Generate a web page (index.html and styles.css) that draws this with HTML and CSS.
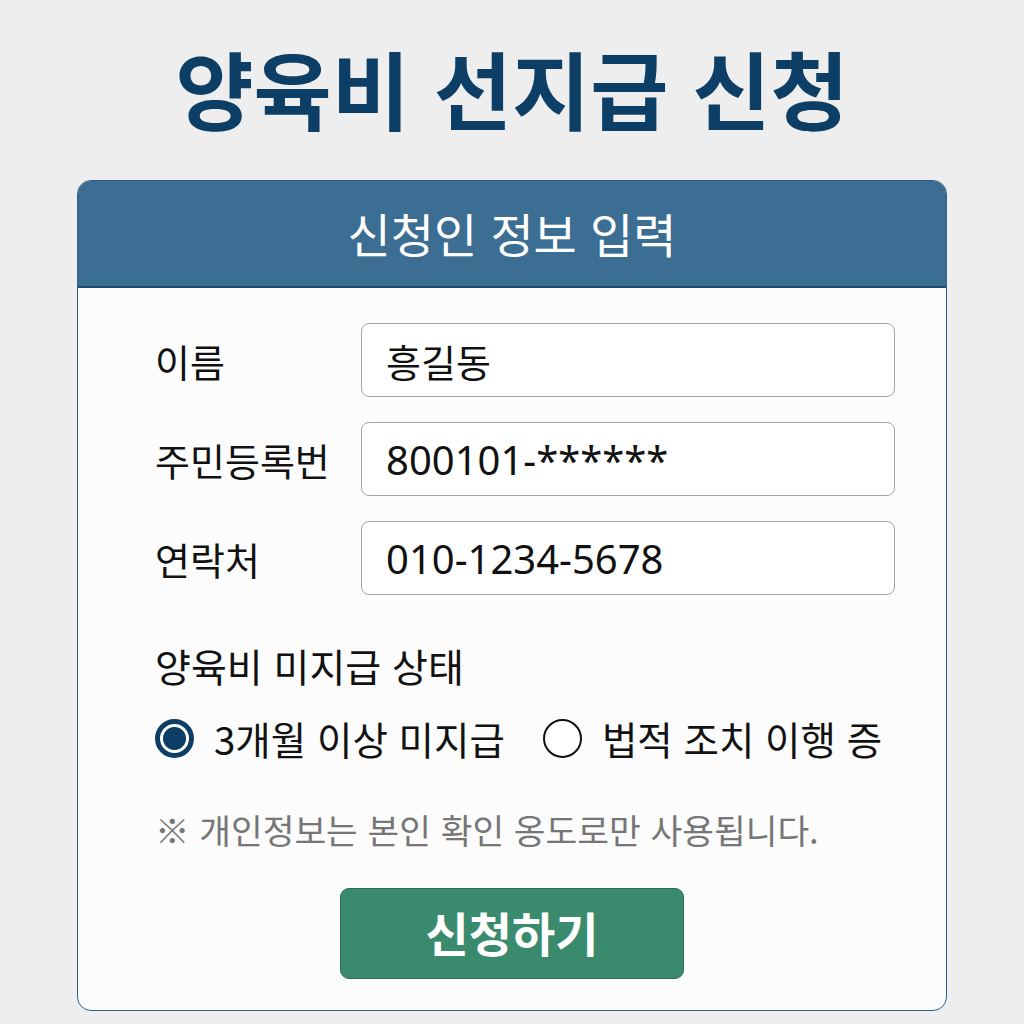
FILE: index.html
```html
<!DOCTYPE html>
<html lang="ko">
<head>
<meta charset="utf-8">
<link rel="stylesheet" href="styles.css">
</head>
<body>
<main class="page">
  <h1 class="title">양육비 선지급 신청</h1>
  <section class="card">
    <header class="card-head">신청인 정보 입력</header>
    <div class="card-body">
      <div class="field">
        <span class="label">이름</span>
        <div class="input name">흥길동</div>
      </div>
      <div class="field">
        <span class="label">주민등록번</span>
        <div class="input">800101-******</div>
      </div>
      <div class="field">
        <span class="label">연락처</span>
        <div class="input">010-1234-5678</div>
      </div>
      <div class="status-title">양육비 미지급 상태</div>
      <div class="radios">
        <label class="radio"><span class="dot checked"></span>3개월 이상 미지급</label>
        <label class="radio"><span class="dot"></span>법적 조치 이행 증</label>
      </div>
      <p class="note">※ 개인정보는 본인 확인 옹도로만 사용됩니다.</p>
      <div class="actions"><button class="submit">신청하기</button></div>
    </div>
  </section>
</main>
</body>
</html>
```
FILE: styles.css
```css
html, body {
  margin: 0;
  padding: 0;
  background: #eeeeee;
}
body {
  font-family: "Noto Sans CJK KR", "Noto Sans", sans-serif;
  color: #111;
}
.page {
  width: 1024px;
  height: 1024px;
  display: flex;
  flex-direction: column;
  align-items: center;
  box-sizing: border-box;
  padding-top: 27px;
}
.title {
  margin: 0;
  font-size: 85px;
  line-height: 120px;
  font-weight: 700;
  color: #0d3f66;
  letter-spacing: 0;
  height: 153px;
}
.card {
  width: 870px;
  height: 831px;
  box-sizing: border-box;
  background: #fcfcfc;
  border: 1.5px solid #2f5f8c;
  border-radius: 14px;
  overflow: hidden;
  display: flex;
  flex-direction: column;
}
.card-head {
  height: 107px;
  background: #3b6e92;
  color: #fff;
  font-size: 47px;
  font-weight: 400;
  display: flex;
  align-items: center;
  justify-content: center;
  border-bottom: 2px solid #224d72;
  box-sizing: border-box;
  padding-bottom: 2px;
}
.card-body {
  padding: 35px 51px 0 77px;
  display: flex;
  flex-direction: column;
}
.field {
  display: flex;
  align-items: center;
  height: 74px;
  margin-bottom: 25px;
}
.label {
  width: 206px;
  font-size: 38px;
  font-weight: 400;
}
.input {
  flex: 1;
  height: 74px;
  box-sizing: border-box;
  border: 1.5px solid #a3a3a3;
  border-radius: 8px;
  background: #fff;
  padding-left: 24px;
  display: flex;
  align-items: center;
  font-size: 40px;
  font-weight: 400;
  font-family: "Noto Sans", "Noto Sans CJK KR", sans-serif;
}
.input.name {
  font-family: "Noto Sans CJK KR", sans-serif;
  font-size: 38px;
}
.status-title {
  margin-top: 18px;
  font-size: 39px;
  font-weight: 400;
  line-height: 54px;
}
.radios {
  display: flex;
  align-items: center;
  margin-top: 18px;
  gap: 38px;
  font-size: 38.5px;
  font-weight: 400;
}
.radio {
  display: flex;
  align-items: center;
  gap: 20px;
}
.dot {
  width: 39px;
  height: 39px;
  box-sizing: border-box;
  border-radius: 50%;
  border: 2.5px solid #111;
  background: #fff;
}
.dot.checked {
  border: 5px solid #0d3f66;
  background: radial-gradient(circle, #0d3f66 0 11px, #fff 12px);
}
.note {
  margin: 38px 0 0;
  font-size: 34.5px;
  color: #767676;
  font-weight: 400;
}
.actions {
  display: flex;
  justify-content: center;
  margin-top: 34px;
  padding-right: 26px;
}
.submit {
  width: 344px;
  height: 91px;
  border: 1.5px solid #2d6f55;
  border-radius: 9px;
  background: #3a8a6e;
  color: #fff;
  font-family: "Noto Sans CJK KR", sans-serif;
  font-size: 47px;
  font-weight: 700;
  padding: 0 0 4px;
}
```
